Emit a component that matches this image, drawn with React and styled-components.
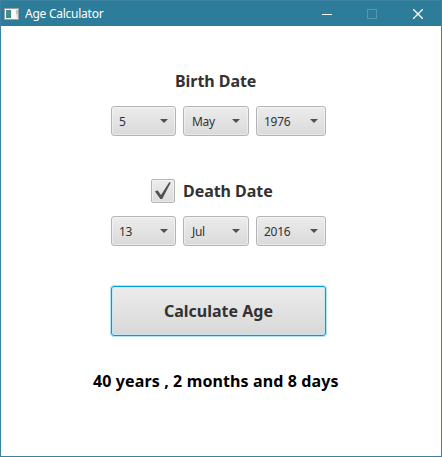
import React from "react";
import styled, { createGlobalStyle } from "styled-components";

const GlobalStyle = createGlobalStyle`
  * { box-sizing: border-box; }
  body { margin: 0; background: #fff; font-family: "Noto Sans", "Open Sans", sans-serif; }
`;

const Window = styled.div`
  display: flex;
  flex-direction: column;
  width: 442px;
  height: 457px;
  background: #fff;
  border: 1px solid #3a82a0;
`;

const TitleBar = styled.header`
  display: flex;
  align-items: center;
  height: 25px;
  flex: none;
  padding-left: 3px;
  background: #2d7d9a;
  color: #fff;
`;

const Title = styled.span`
  flex: 1;
  margin-left: 5px;
  font-size: 12px;
  line-height: 16px;
  letter-spacing: -0.25px;
`;

const WindowButton = styled.button`
  display: flex;
  align-items: center;
  justify-content: center;
  width: ${(p) => p.$width}px;
  height: 25px;
  padding: 0;
  border: 0;
  background: transparent;
  color: ${(p) => (p.$disabled ? "#5498b0" : "#fff")};
`;

const Content = styled.main`
  display: flex;
  flex-direction: column;
  width: 215px;
  margin-left: 110px;
  padding-top: 43px;
`;

const Heading = styled.div`
  display: flex;
  align-items: center;
  height: 24px;
  margin: ${(p) => p.$top}px 0 0 ${(p) => p.$indent}px;
  font-size: 16px;
  font-weight: 700;
  line-height: 24px;
  letter-spacing: -0.05px;
  white-space: nowrap;
  color: #323232;
`;

const DateRow = styled.div`
  display: flex;
  gap: 7px;
  margin-top: ${(p) => p.$top}px;
`;

const Select = styled.button`
  display: flex;
  align-items: center;
  justify-content: space-between;
  flex: none;
  width: ${(p) => p.$width}px;
  height: 30px;
  padding: 1px ${(p) => p.$end}px 0 ${(p) => p.$start}px;
  border: 1px solid #b5b5b5;
  border-radius: 3px;
  background: linear-gradient(#ececec, #dadada);
  box-shadow: inset 0 0 0 1px rgba(255, 255, 255, 0.4);
  font: 12px/16px "Noto Sans", "Open Sans", sans-serif;
  letter-spacing: -0.3px;
  color: #323232;
`;

const CheckBox = styled.span`
  display: flex;
  align-items: center;
  justify-content: center;
  width: 24px;
  height: 24px;
  margin-right: 8px;
  border: 1px solid #b5b5b5;
  border-radius: 2px;
  background: linear-gradient(#ececec, #dcdcdc);
  box-shadow: inset 0 0 0 1px rgba(255, 255, 255, 0.4);
`;

const CalculateButton = styled.button`
  height: 50px;
  width: 215px;
  margin-top: 40px;
  padding: 0;
  border: 1px solid #039ed3;
  border-radius: 3px;
  background: linear-gradient(#ececec, #d8d8d8);
  box-shadow: 0 0 0 1px #b4e2f2, inset 0 0 0 1px rgba(190, 232, 246, 0.7);
  font: 700 16px/24px "Noto Sans", "Open Sans", sans-serif;
  letter-spacing: 0;
  color: #323232;
`;

const Result = styled.output`
  margin: 33px 0 0 -18px;
  font-size: 16px;
  font-weight: 700;
  line-height: 24px;
  letter-spacing: 0.12px;
  white-space: nowrap;
  color: #000;
`;

const AppIcon = () => (
  <svg width="16" height="14" viewBox="0 0 16 14" shapeRendering="crispEdges">
    <defs>
      <linearGradient id="pane" x1="0" y1="0" x2="1" y2="1">
        <stop offset="0" stopColor="#4d8cae" />
        <stop offset="1" stopColor="#398c65" />
      </linearGradient>
    </defs>
    <rect x="0.5" y="1.5" width="14" height="11" fill="#f5f5f5" stroke="#9a9fa1" />
    <rect x="2" y="3" width="5" height="8" fill="url(#pane)" />
    <rect x="8" y="3" width="3" height="8" fill="#ffffff" />
    <rect x="12" y="3" width="2" height="4" fill="#a9d3bd" />
    <rect x="12" y="7" width="2" height="4" fill="#e2e5e5" />
  </svg>
);

const ArrowIcon = styled.svg`
  display: block;
  margin-bottom: 1px;
`;

const Arrow = () => (
  <ArrowIcon width="8" height="4" viewBox="0 0 8 4">
    <path d="M0 0H8L4 4Z" fill="#505050" />
  </ArrowIcon>
);

function DateFields({ day, month, year }) {
  return (
    <DateRow $top={13}>
      <Select $width={65} $start={7} $end={7}>{day}<Arrow /></Select>
      <Select $width={66} $start={8} $end={8}>{month}<Arrow /></Select>
      <Select $width={70} $start={7} $end={7}>{year}<Arrow /></Select>
    </DateRow>
  );
}

export default function App() {
  return (
    <Window>
      <GlobalStyle />
      <TitleBar>
        <AppIcon />
        <Title>Age Calculator</Title>
        <WindowButton $width={44} aria-label="Minimize">
          <svg width="10" height="10"><path d="M0 5.5H10" stroke="currentColor" /></svg>
        </WindowButton>
        <WindowButton $width={46} $disabled aria-label="Maximize">
          <svg width="10" height="10"><path d="M.5.5H9.5V9.5H.5Z" fill="none" stroke="currentColor" /></svg>
        </WindowButton>
        <WindowButton $width={46} aria-label="Close">
          <svg width="10" height="10"><path d="M0 0L10 10M10 0L0 10" stroke="currentColor" strokeWidth="1.3" /></svg>
        </WindowButton>
      </TitleBar>
      <Content>
        <Heading $indent={64} $top={0}>Birth Date</Heading>
        <DateFields day="5" month="May" year="1976" />
        <Heading as="label" $indent={40} $top={43}>
          <CheckBox>
            <svg width="18" height="20" viewBox="0 0 18 20">
              <path d="M1 10.5L3.5 9.2L7 14L15.2 1.2L16.8 1.4L8.2 18H6.4Z" fill="#4f4f4f" />
            </svg>
          </CheckBox>
          Death Date
        </Heading>
        <DateFields day="13" month="Jul" year="2016" />
        <CalculateButton>Calculate Age</CalculateButton>
        <Result>40 years , 2 months and 8 days</Result>
      </Content>
    </Window>
  );
}
